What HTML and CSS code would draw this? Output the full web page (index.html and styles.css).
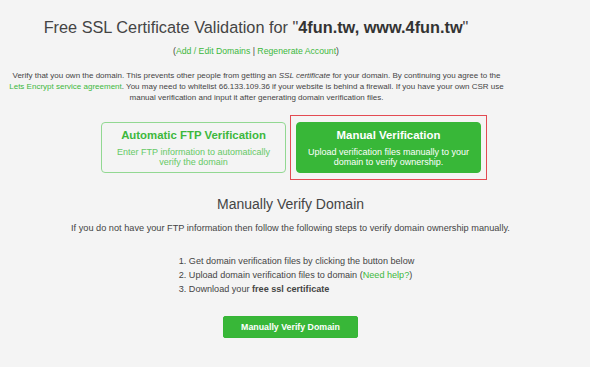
FILE: index.html
```html
<!DOCTYPE html>
<html>
<head>
<meta charset="utf-8">
<link rel="stylesheet" href="styles.css">
</head>
<body>
<div class="top">
  <h1 class="title">Free SSL Certificate Validation for "<b>4fun.tw, www.4fun.tw</b>"</h1>
  <p class="links">(<a>Add / Edit Domains</a> | <a>Regenerate Account</a>)</p>
  <p class="intro">Verify that you own the domain. This prevents other people from getting an <i>SSL certificate</i> for your domain. By continuing you agree to the <a>Lets Encrypt service agreement</a>. You may need to whitelist 66.133.109.36 if your website is behind a firewall. If you have your own CSR use manual verification and input it after generating domain verification files.</p>
</div>
<div class="choices">
  <div class="choice outline">
    <div class="choice-title">Automatic FTP Verification</div>
    <div class="choice-text">Enter FTP information to automatically verify the domain</div>
  </div>
  <div class="highlight">
    <div class="choice solid">
      <div class="choice-title">Manual Verification</div>
      <div class="choice-text">Upload verification files manually to your domain to verify ownership.</div>
    </div>
  </div>
</div>
<div class="manual">
  <h2 class="sub">Manually Verify Domain</h2>
  <p class="lead">If you do not have your FTP information then follow the following steps to verify domain ownership manually.</p>
  <ol class="steps">
    <li>Get domain verification files by clicking the button below</li>
    <li>Upload domain verification files to domain (<a>Need help?</a>)</li>
    <li>Download your <b>free ssl certificate</b></li>
  </ol>
  <button class="btn">Manually Verify Domain</button>
</div>
</body>
</html>
```
FILE: styles.css
```css
html, body { margin: 0; padding: 0; }
body {
  background: #f4f4f4;
  font-family: "Liberation Sans", Arial, sans-serif;
  color: #444;
  width: 590px;
  height: 367px;
  overflow: hidden;
}
a { color: #3db83d; }
.top { width: 512px; text-align: center; }
.title {
  margin: 0;
  padding-top: 17px;
  font-size: 16.3px;
  font-weight: normal;
  line-height: 20px;
  color: #444;
}
.title b { color: #333; }
.links { margin: 8px 0 0; font-size: 8.7px; line-height: 12px; }
.intro {
  width: 505px;
  margin: 13px 0 0 4px;
  font-size: 8px;
  line-height: 11px;
  color: #444;
}
.choices {
  display: flex;
  align-items: center;
  margin-top: 12px;
  padding-left: 101px;
  gap: 4px;
}
.choice {
  box-sizing: border-box;
  width: 185px;
  height: 51px;
  border-radius: 4px;
  text-align: center;
  padding-top: 4.5px;
}
.outline { border: 1px solid #92d892; color: #3db83d; }
.outline .choice-text { color: #66c966; }
.highlight {
  border: 1px solid #e34a52;
  padding: 6px 5px;
}
.solid { background: #38b738; color: #fff; border: 1px solid #38b738; }
.choice-title { font-size: 11.4px; font-weight: bold; line-height: 14px; }
.choice-text { font-size: 9px; line-height: 10px; margin-top: 5px; padding: 0 6px; }
.manual { text-align: center; padding-right: 9px; }
.sub {
  margin: 15px 0 0;
  font-size: 14px;
  font-weight: normal;
  line-height: 18px;
  color: #444;
}
.lead { margin: 9px 0 0; font-size: 9.2px; line-height: 12px; }
.steps {
  display: inline-block;
  text-align: left;
  margin: 20px 0 0 12px;
  padding-left: 0;
  font-size: 9.1px;
  line-height: 14px;
  list-style-position: inside;
}
.btn {
  display: block;
  margin: 20px auto 0;
  width: 135px;
  height: 22px;
  border: 1px solid #36b536;
  border-radius: 2px;
  background: #38b738;
  color: #fff;
  font-family: "Liberation Sans", Arial, sans-serif;
  font-weight: bold;
  font-size: 8.8px;
  padding: 0;
}
```
